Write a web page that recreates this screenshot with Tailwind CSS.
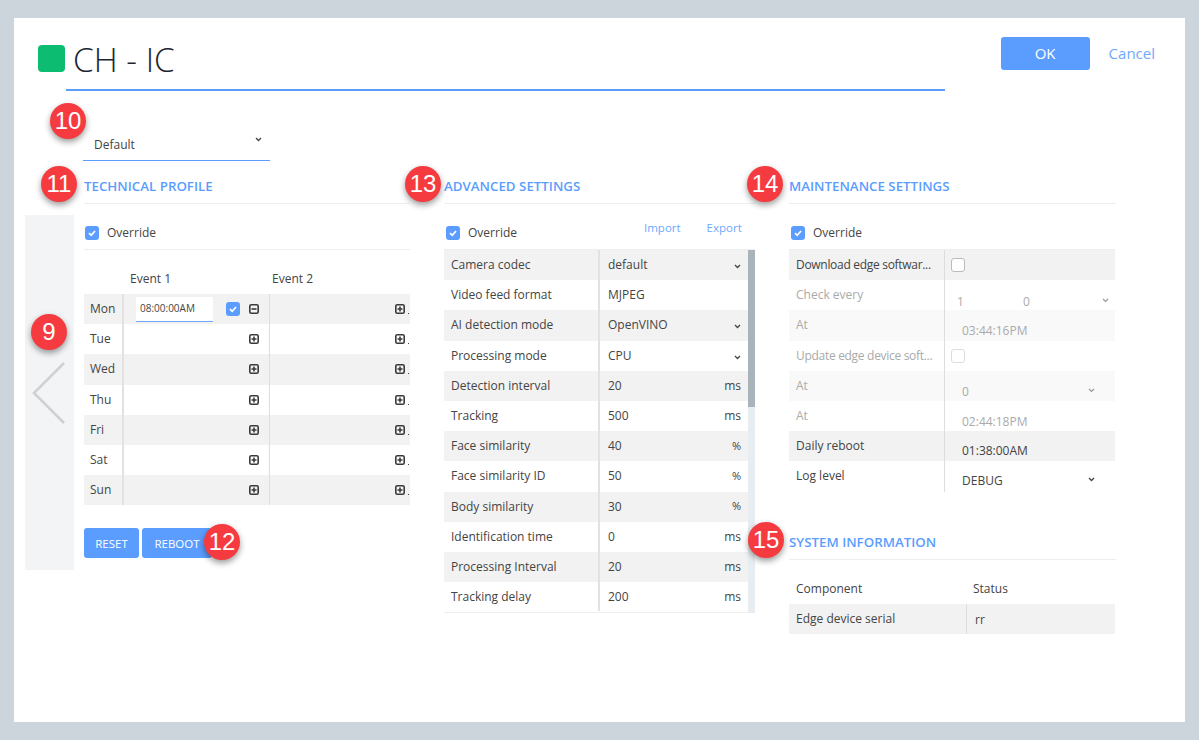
<!DOCTYPE html>
<html lang="en">
  <head>
    <meta charset="UTF-8" />
    <title>CH - IC</title>
    <script src="https://cdn.jsdelivr.net/npm/@tailwindcss/browser@4"></script>
  </head>
  <body class="h-[740px] overflow-hidden bg-[#cdd5dc] font-['Open_Sans',sans-serif] text-[12px] text-[#444]">
    <main class="relative ml-[14px] mt-[18px] h-[704px] w-[1171px] bg-white">
      <!-- Header -->
      <header class="flex h-[71px] items-start">
        <div class="ml-[24px] mt-[27px] h-[27px] w-[27px] rounded-[4px] bg-[#0cbc70]"></div>
        <h1 class="ml-[8px] mt-[17px] text-[33.3px] leading-[48px] font-light text-[#1c2530]">CH - IC</h1>
        <button class="ml-auto mt-[19px] h-[33px] w-[89px] rounded-[3px] bg-[#5b9dff] text-[15px] text-white">OK</button>
        <a class="ml-[19px] mr-[30px] mt-[25px] text-[15px] leading-[20px] text-[#6ea8ff]">Cancel</a>
      </header>
      <div class="ml-[52px] h-[2px] w-[879px] bg-[#5b9dff]"></div>

      <!-- Profile select -->
      <div class="relative ml-[69px] mt-[37px] flex h-[33px] w-[187px] items-center border-b border-[#5b9dff] pl-[11px] pt-[1px]">
        Default
        <svg class="absolute right-[8px] top-[9px] h-[5px] w-[7px]" viewBox="0 0 7 5" fill="none" stroke="#444" stroke-width="1.3"><path d="M1 1l2.5 2.5L6 1" /></svg>
      </div>

      <div class="mt-[8px] flex items-start">
        <!-- Technical profile -->
        <section class="ml-[11px] w-[385px]">
          <h2 class="ml-[59px] h-[35px] border-b border-[#eceef0] pt-[8px] text-[13.3px] leading-[18px] font-semibold text-[#5b9dff]">TECHNICAL PROFILE</h2>
          <div class="mt-[11px] flex gap-[10px]">
            <div class="flex h-[355px] w-[49px] items-start bg-[#f3f4f6]">
              <svg class="ml-[6px] mt-[146px] h-[64px] w-[36px]" viewBox="0 0 36 64" fill="none" stroke="#d0d0d0" stroke-width="2.5"><path d="M33 2L3 32l30 30" /></svg>
            </div>
            <div class="w-[326px]">
              <div class="flex h-[35px] items-center gap-[8px] border-b border-[#eceef0] pl-[1px] pt-[2px]">
                <svg class="h-[14px] w-[14px]" viewBox="0 0 14 14"><rect width="14" height="14" rx="3" fill="#5b9dff" /><path d="M4 7.2l2.2 2L10 5" fill="none" stroke="#fff" stroke-width="1.7" /></svg>
                Override
              </div>
              <div class="flex h-[44px] pt-[21px] leading-[16px]">
                <span class="ml-[46px] w-[142px]">Event 1</span>
                <span>Event 2</span>
              </div>
              <div class="overflow-hidden">
                <div class="flex h-[30.2px] items-center bg-[#f2f2f2]">
                  <span class="w-[38px] pl-[6px]">Mon</span>
                  <div class="flex h-full w-[147px] items-center border-l-2 border-[#e2e2e2] pl-[12px]">
                    <span class="flex h-[25px] w-[77px] items-center border-b border-[#6ea8ff] bg-white pl-[4px] text-[10px]">08:00:00AM</span>
                    <svg class="ml-[13px] h-[14px] w-[14px]" viewBox="0 0 14 14"><rect width="14" height="14" rx="3" fill="#5b9dff" /><path d="M4 7.2l2.2 2L10 5" fill="none" stroke="#fff" stroke-width="1.7" /></svg>
                    <svg class="ml-[9px] h-[10px] w-[10px]" viewBox="0 0 10 10" fill="none" stroke="#3a3a3a" stroke-width="1.6"><rect x=".8" y=".8" width="8.4" height="8.4" rx="1.5" /><path d="M2.5 5h5" /></svg>
                  </div>
                  <div class="flex h-full flex-1 items-center border-l border-[#ddd] pl-[125px]">
                    <svg class="h-[10px] w-[10px]" viewBox="0 0 10 10" fill="none" stroke="#3a3a3a" stroke-width="1.6"><rect x=".8" y=".8" width="8.4" height="8.4" rx="1.5" /><path d="M2.5 5h5M5 2.5v5" /></svg>
                    <span class="ml-[3px] mt-[9px] h-[1px] w-[1px] bg-[#444]"></span>
                  </div>
                </div>
                <div class="flex h-[30.2px] items-center">
                  <span class="w-[38px] pl-[6px]">Tue</span>
                  <div class="flex h-full w-[147px] items-center border-l-2 border-[#e2e2e2] pl-[125px]">
                    <svg class="h-[10px] w-[10px]" viewBox="0 0 10 10" fill="none" stroke="#3a3a3a" stroke-width="1.6"><rect x=".8" y=".8" width="8.4" height="8.4" rx="1.5" /><path d="M2.5 5h5M5 2.5v5" /></svg>
                  </div>
                  <div class="flex h-full flex-1 items-center border-l border-[#ddd] pl-[125px]">
                    <svg class="h-[10px] w-[10px]" viewBox="0 0 10 10" fill="none" stroke="#3a3a3a" stroke-width="1.6"><rect x=".8" y=".8" width="8.4" height="8.4" rx="1.5" /><path d="M2.5 5h5M5 2.5v5" /></svg>
                    <span class="ml-[3px] mt-[9px] h-[1px] w-[1px] bg-[#444]"></span>
                  </div>
                </div>
                <div class="flex h-[30.2px] items-center bg-[#f2f2f2]">
                  <span class="w-[38px] pl-[6px]">Wed</span>
                  <div class="flex h-full w-[147px] items-center border-l-2 border-[#e2e2e2] pl-[125px]">
                    <svg class="h-[10px] w-[10px]" viewBox="0 0 10 10" fill="none" stroke="#3a3a3a" stroke-width="1.6"><rect x=".8" y=".8" width="8.4" height="8.4" rx="1.5" /><path d="M2.5 5h5M5 2.5v5" /></svg>
                  </div>
                  <div class="flex h-full flex-1 items-center border-l border-[#ddd] pl-[125px]">
                    <svg class="h-[10px] w-[10px]" viewBox="0 0 10 10" fill="none" stroke="#3a3a3a" stroke-width="1.6"><rect x=".8" y=".8" width="8.4" height="8.4" rx="1.5" /><path d="M2.5 5h5M5 2.5v5" /></svg>
                    <span class="ml-[3px] mt-[9px] h-[1px] w-[1px] bg-[#444]"></span>
                  </div>
                </div>
                <div class="flex h-[30.2px] items-center">
                  <span class="w-[38px] pl-[6px]">Thu</span>
                  <div class="flex h-full w-[147px] items-center border-l-2 border-[#e2e2e2] pl-[125px]">
                    <svg class="h-[10px] w-[10px]" viewBox="0 0 10 10" fill="none" stroke="#3a3a3a" stroke-width="1.6"><rect x=".8" y=".8" width="8.4" height="8.4" rx="1.5" /><path d="M2.5 5h5M5 2.5v5" /></svg>
                  </div>
                  <div class="flex h-full flex-1 items-center border-l border-[#ddd] pl-[125px]">
                    <svg class="h-[10px] w-[10px]" viewBox="0 0 10 10" fill="none" stroke="#3a3a3a" stroke-width="1.6"><rect x=".8" y=".8" width="8.4" height="8.4" rx="1.5" /><path d="M2.5 5h5M5 2.5v5" /></svg>
                    <span class="ml-[3px] mt-[9px] h-[1px] w-[1px] bg-[#444]"></span>
                  </div>
                </div>
                <div class="flex h-[30.2px] items-center bg-[#f2f2f2]">
                  <span class="w-[38px] pl-[6px]">Fri</span>
                  <div class="flex h-full w-[147px] items-center border-l-2 border-[#e2e2e2] pl-[125px]">
                    <svg class="h-[10px] w-[10px]" viewBox="0 0 10 10" fill="none" stroke="#3a3a3a" stroke-width="1.6"><rect x=".8" y=".8" width="8.4" height="8.4" rx="1.5" /><path d="M2.5 5h5M5 2.5v5" /></svg>
                  </div>
                  <div class="flex h-full flex-1 items-center border-l border-[#ddd] pl-[125px]">
                    <svg class="h-[10px] w-[10px]" viewBox="0 0 10 10" fill="none" stroke="#3a3a3a" stroke-width="1.6"><rect x=".8" y=".8" width="8.4" height="8.4" rx="1.5" /><path d="M2.5 5h5M5 2.5v5" /></svg>
                    <span class="ml-[3px] mt-[9px] h-[1px] w-[1px] bg-[#444]"></span>
                  </div>
                </div>
                <div class="flex h-[30.2px] items-center">
                  <span class="w-[38px] pl-[6px]">Sat</span>
                  <div class="flex h-full w-[147px] items-center border-l-2 border-[#e2e2e2] pl-[125px]">
                    <svg class="h-[10px] w-[10px]" viewBox="0 0 10 10" fill="none" stroke="#3a3a3a" stroke-width="1.6"><rect x=".8" y=".8" width="8.4" height="8.4" rx="1.5" /><path d="M2.5 5h5M5 2.5v5" /></svg>
                  </div>
                  <div class="flex h-full flex-1 items-center border-l border-[#ddd] pl-[125px]">
                    <svg class="h-[10px] w-[10px]" viewBox="0 0 10 10" fill="none" stroke="#3a3a3a" stroke-width="1.6"><rect x=".8" y=".8" width="8.4" height="8.4" rx="1.5" /><path d="M2.5 5h5M5 2.5v5" /></svg>
                    <span class="ml-[3px] mt-[9px] h-[1px] w-[1px] bg-[#444]"></span>
                  </div>
                </div>
                <div class="flex h-[30.2px] items-center bg-[#f2f2f2]">
                  <span class="w-[38px] pl-[6px]">Sun</span>
                  <div class="flex h-full w-[147px] items-center border-l-2 border-[#e2e2e2] pl-[125px]">
                    <svg class="h-[10px] w-[10px]" viewBox="0 0 10 10" fill="none" stroke="#3a3a3a" stroke-width="1.6"><rect x=".8" y=".8" width="8.4" height="8.4" rx="1.5" /><path d="M2.5 5h5M5 2.5v5" /></svg>
                  </div>
                  <div class="flex h-full flex-1 items-center border-l border-[#ddd] pl-[125px]">
                    <svg class="h-[10px] w-[10px]" viewBox="0 0 10 10" fill="none" stroke="#3a3a3a" stroke-width="1.6"><rect x=".8" y=".8" width="8.4" height="8.4" rx="1.5" /><path d="M2.5 5h5M5 2.5v5" /></svg>
                    <span class="ml-[3px] mt-[9px] h-[1px] w-[1px] bg-[#444]"></span>
                  </div>
                </div>
              </div>
              <div class="mt-[23px] flex gap-[3px]">
                <button class="h-[30px] w-[55px] rounded-[3px] bg-[#5b9dff] text-[11.5px] font-medium text-white">RESET</button>
                <button class="h-[30px] w-[70px] rounded-[3px] bg-[#5b9dff] text-[11.5px] font-medium text-white">REBOOT</button>
              </div>
            </div>
          </div>
        </section>

        <!-- Advanced settings -->
        <section class="ml-[34px] w-[311px]">
          <h2 class="h-[35px] border-b border-[#eceef0] pt-[8px] text-[13.3px] leading-[18px] font-semibold text-[#5b9dff]">ADVANCED SETTINGS</h2>
          <div class="flex h-[45px]">
            <div class="ml-[2px] mt-[22px] flex h-[14px] items-center gap-[8px]">
              <svg class="h-[14px] w-[14px]" viewBox="0 0 14 14"><rect width="14" height="14" rx="3" fill="#5b9dff" /><path d="M4 7.2l2.2 2L10 5" fill="none" stroke="#fff" stroke-width="1.7" /></svg>
              Override
            </div>
            <a class="ml-[127px] mt-[16px] text-[11.5px] leading-[16px] text-[#6ea8ff]">Import</a>
            <a class="ml-[26px] mt-[16px] text-[11.5px] leading-[16px] text-[#6ea8ff]">Export</a>
          </div>
          <div class="flex border-t border-[#eee]">
            <div class="w-[304px]">
              <div class="flex h-[30.2px] items-center bg-[#f2f2f2]">
                <span class="w-[154px] pl-[7px]">Camera codec</span>
                <div class="flex h-full flex-1 items-center border-l-2 border-[#e2e2e2] pl-[8px] pr-[7px]">default
                  <svg class="ml-auto mt-[3px] h-[5px] w-[7px]" viewBox="0 0 7 5" fill="none" stroke="#444" stroke-width="1.3"><path d="M1 1l2.5 2.5L6 1" /></svg>
                </div>
              </div>
              <div class="flex h-[30.2px] items-center">
                <span class="w-[154px] pl-[7px]">Video feed format</span>
                <div class="flex h-full flex-1 items-center border-l-2 border-[#e2e2e2] pl-[8px] pr-[7px]">MJPEG</div>
              </div>
              <div class="flex h-[30.2px] items-center bg-[#f2f2f2]">
                <span class="w-[154px] pl-[7px]">AI detection mode</span>
                <div class="flex h-full flex-1 items-center border-l-2 border-[#e2e2e2] pl-[8px] pr-[7px]">OpenVINO
                  <svg class="ml-auto mt-[3px] h-[5px] w-[7px]" viewBox="0 0 7 5" fill="none" stroke="#444" stroke-width="1.3"><path d="M1 1l2.5 2.5L6 1" /></svg>
                </div>
              </div>
              <div class="flex h-[30.2px] items-center">
                <span class="w-[154px] pl-[7px]">Processing mode</span>
                <div class="flex h-full flex-1 items-center border-l-2 border-[#e2e2e2] pl-[8px] pr-[7px]">CPU
                  <svg class="ml-auto mt-[3px] h-[5px] w-[7px]" viewBox="0 0 7 5" fill="none" stroke="#444" stroke-width="1.3"><path d="M1 1l2.5 2.5L6 1" /></svg>
                </div>
              </div>
              <div class="flex h-[30.2px] items-center bg-[#f2f2f2]">
                <span class="w-[154px] pl-[7px]">Detection interval</span>
                <div class="flex h-full flex-1 items-center justify-between border-l-2 border-[#e2e2e2] pl-[8px] pr-[7px]"><span>20</span><span>ms</span></div>
              </div>
              <div class="flex h-[30.2px] items-center">
                <span class="w-[154px] pl-[7px]">Tracking</span>
                <div class="flex h-full flex-1 items-center justify-between border-l-2 border-[#e2e2e2] pl-[8px] pr-[7px]"><span>500</span><span>ms</span></div>
              </div>
              <div class="flex h-[30.2px] items-center bg-[#f2f2f2]">
                <span class="w-[154px] pl-[7px]">Face similarity</span>
                <div class="flex h-full flex-1 items-center justify-between border-l-2 border-[#e2e2e2] pl-[8px] pr-[7px]"><span>40</span><span class="text-[11px]">%</span></div>
              </div>
              <div class="flex h-[30.2px] items-center">
                <span class="w-[154px] pl-[7px]">Face similarity ID</span>
                <div class="flex h-full flex-1 items-center justify-between border-l-2 border-[#e2e2e2] pl-[8px] pr-[7px]"><span>50</span><span class="text-[11px]">%</span></div>
              </div>
              <div class="flex h-[30.2px] items-center bg-[#f2f2f2]">
                <span class="w-[154px] pl-[7px]">Body similarity</span>
                <div class="flex h-full flex-1 items-center justify-between border-l-2 border-[#e2e2e2] pl-[8px] pr-[7px]"><span>30</span><span class="text-[11px]">%</span></div>
              </div>
              <div class="flex h-[30.2px] items-center">
                <span class="w-[154px] pl-[7px]">Identification time</span>
                <div class="flex h-full flex-1 items-center justify-between border-l-2 border-[#e2e2e2] pl-[8px] pr-[7px]"><span>0</span><span>ms</span></div>
              </div>
              <div class="flex h-[30.2px] items-center bg-[#f2f2f2]">
                <span class="w-[154px] pl-[7px]">Processing Interval</span>
                <div class="flex h-full flex-1 items-center justify-between border-l-2 border-[#e2e2e2] pl-[8px] pr-[7px]"><span>20</span><span>ms</span></div>
              </div>
              <div class="flex h-[31.2px] items-center border-b border-[#eee] pb-[1px]">
                <span class="w-[154px] pl-[7px]">Tracking delay</span>
                <div class="flex h-full flex-1 items-center justify-between border-l-2 border-[#e2e2e2] pl-[8px] pr-[7px]"><span>200</span><span>ms</span></div>
              </div>
            </div>
            <div class="w-[7px] bg-[#e8edf1]">
              <div class="h-[157px] bg-[#a9b4ba]"></div>
            </div>
          </div>
        </section>

        <!-- Maintenance settings -->
        <section class="ml-[34px] w-[327px]">
          <h2 class="h-[35px] border-b border-[#eceef0] pt-[8px] text-[13.3px] leading-[18px] font-semibold text-[#5b9dff]">MAINTENANCE SETTINGS</h2>
          <div class="flex h-[45px]">
            <div class="ml-[2px] mt-[22px] flex h-[14px] items-center gap-[8px]">
              <svg class="h-[14px] w-[14px]" viewBox="0 0 14 14"><rect width="14" height="14" rx="3" fill="#5b9dff" /><path d="M4 7.2l2.2 2L10 5" fill="none" stroke="#fff" stroke-width="1.7" /></svg>
              Override
            </div>
          </div>
          <div class="w-[326px] border-t border-[#eee]">
            <div class="flex h-[30.2px] bg-[#f2f2f2]">
              <span class="w-[155px] whitespace-nowrap pl-[7px] leading-[30px] tracking-[-0.3px]">Download edge softwar...</span>
              <div class="flex flex-1 items-center border-l border-[#ddd] pl-[6px]">
                <span class="h-[14px] w-[14px] rounded-[3px] border border-[#bbb] bg-white"></span>
              </div>
            </div>
            <div class="text-[#aaa]">
              <div class="flex h-[30.2px]">
                <span class="w-[155px] pl-[7px] leading-[30px]">Check every</span>
                <div class="relative flex-1 border-l border-[#ddd] pl-[12px] pt-[14px] leading-[16px]">
                  <span>1</span><span class="ml-[59px]">0</span>
                  <svg class="absolute right-[6px] top-[18px] h-[5px] w-[7px]" viewBox="0 0 7 5" fill="none" stroke="#999" stroke-width="1.2"><path d="M1 1l2.5 2.5L6 1" /></svg>
                </div>
              </div>
              <div class="flex h-[30.2px] bg-[#f9f9f9]">
                <span class="w-[155px] pl-[7px] leading-[30px]">At</span>
                <div class="flex-1 border-l border-[#ddd] pl-[17px] pt-[13px] leading-[16px]">03:44:16PM</div>
              </div>
              <div class="flex h-[30.2px]">
                <span class="w-[155px] whitespace-nowrap pl-[7px] leading-[30px] tracking-[-0.3px]">Update edge device soft...</span>
                <div class="flex flex-1 items-center border-l border-[#ddd] pl-[6px]">
                  <span class="h-[14px] w-[14px] rounded-[3px] border border-[#ddd] bg-white"></span>
                </div>
              </div>
              <div class="flex h-[30.2px] bg-[#f9f9f9]">
                <span class="w-[155px] pl-[7px] leading-[30px]">At</span>
                <div class="relative flex-1 border-l border-[#ddd] pl-[17px] pt-[13px] leading-[16px]">0
                  <svg class="absolute right-[20px] top-[17px] h-[5px] w-[7px]" viewBox="0 0 7 5" fill="none" stroke="#999" stroke-width="1.2"><path d="M1 1l2.5 2.5L6 1" /></svg>
                </div>
              </div>
              <div class="flex h-[30.2px]">
                <span class="w-[155px] pl-[7px] leading-[30px]">At</span>
                <div class="flex-1 border-l border-[#ddd] pl-[17px] pt-[13px] leading-[16px]">02:44:18PM</div>
              </div>
            </div>
            <div class="flex h-[30.2px] bg-[#f2f2f2]">
              <span class="w-[155px] pl-[7px] leading-[30px]">Daily reboot</span>
              <div class="flex-1 border-l border-[#ddd] pl-[17px] pt-[12px] leading-[16px]">01:38:00AM</div>
            </div>
            <div class="flex h-[30.2px]">
              <span class="w-[155px] pl-[7px] leading-[30px]">Log level</span>
              <div class="relative flex-1 border-l border-[#ddd] pl-[17px] pt-[12px] leading-[16px]">DEBUG
                <svg class="absolute right-[20px] top-[16px] h-[5px] w-[7px]" viewBox="0 0 7 5" fill="none" stroke="#444" stroke-width="1.3"><path d="M1 1l2.5 2.5L6 1" /></svg>
              </div>
            </div>
          </div>

          <h2 class="mt-[33px] h-[35px] border-b border-[#eceef0] pt-[8px] text-[13.3px] leading-[18px] font-semibold text-[#5b9dff]">SYSTEM INFORMATION</h2>
          <div class="flex h-[44px] pt-[21px] leading-[16px]">
            <span class="w-[184px] pl-[7px]">Component</span>
            <span>Status</span>
          </div>
          <div class="flex h-[30.2px] w-[326px] bg-[#f2f2f2]">
            <span class="w-[177px] pl-[7px] leading-[29px]">Edge device serial</span>
            <div class="flex-1 border-l border-[#ddd] pl-[8px] leading-[32px]">rr</div>
          </div>
        </section>
      </div>

      <!-- Callout badges -->
      <span class="absolute left-[17px] top-[296px] flex h-[36px] w-[36px] items-center justify-center rounded-full bg-[#f53b3f] font-['Liberation_Sans',sans-serif] text-[24px] text-white shadow-[0_3px_6px_rgba(0,0,0,0.4)]">9</span>
      <span class="absolute left-[36px] top-[85px] flex h-[36px] w-[36px] items-center justify-center rounded-full bg-[#f53b3f] font-['Liberation_Sans',sans-serif] text-[24px] text-white shadow-[0_3px_6px_rgba(0,0,0,0.4)]">10</span>
      <span class="absolute left-[27px] top-[148px] flex h-[36px] w-[36px] items-center justify-center rounded-full bg-[#f53b3f] font-['Liberation_Sans',sans-serif] text-[24px] text-white shadow-[0_3px_6px_rgba(0,0,0,0.4)]">11</span>
      <span class="absolute left-[190px] top-[506px] flex h-[36px] w-[36px] items-center justify-center rounded-full bg-[#f53b3f] font-['Liberation_Sans',sans-serif] text-[24px] text-white shadow-[0_3px_6px_rgba(0,0,0,0.4)]">12</span>
      <span class="absolute left-[391px] top-[148px] flex h-[36px] w-[36px] items-center justify-center rounded-full bg-[#f53b3f] font-['Liberation_Sans',sans-serif] text-[24px] text-white shadow-[0_3px_6px_rgba(0,0,0,0.4)]">13</span>
      <span class="absolute left-[733px] top-[148px] flex h-[36px] w-[36px] items-center justify-center rounded-full bg-[#f53b3f] font-['Liberation_Sans',sans-serif] text-[24px] text-white shadow-[0_3px_6px_rgba(0,0,0,0.4)]">14</span>
      <span class="absolute left-[734px] top-[504px] flex h-[36px] w-[36px] items-center justify-center rounded-full bg-[#f53b3f] font-['Liberation_Sans',sans-serif] text-[24px] text-white shadow-[0_3px_6px_rgba(0,0,0,0.4)]">15</span>
    </main>
  </body>
</html>
